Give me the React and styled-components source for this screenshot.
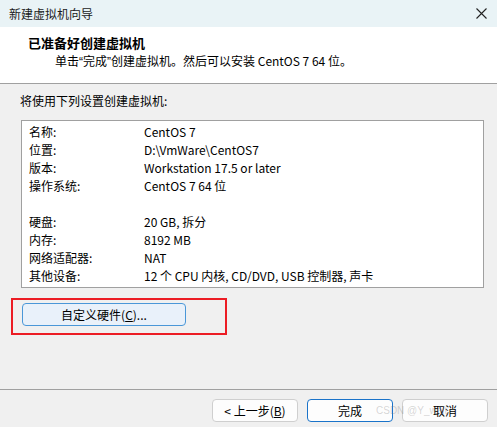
import React from "react";
import styled, { createGlobalStyle } from "styled-components";

const Global = createGlobalStyle`
  html, body { margin: 0; padding: 0; }
  body {
    font-family: "Noto Sans CJK SC", "Noto Sans", sans-serif;
    font-size: 12px;
    color: #000;
    background: #f0f0f0;
  }
`;

const Window = styled.div`
  position: relative;
  width: 497px;
  height: 427px;
  background: #f0f0f0;
  display: flex;
  flex-direction: column;
  overflow: hidden;
`;

const TitleBar = styled.div`
  height: 27px;
  flex: none;
  background: #e9f3f6;
  display: flex;
  align-items: center;
  justify-content: space-between;
  padding: 0 10px 0 9px;
`;

const TitleText = styled.span`
  font-size: 12px;
  line-height: 18px;
  color: #1a1a1a;
`;

const CloseIcon = styled.svg`
  width: 11px;
  height: 11px;
  display: block;
`;

const Header = styled.div`
  flex: none;
  height: 57px;
  box-sizing: border-box;
  background: #fff;
  border-bottom: 1px solid #a0a0a0;
  padding: 7px 0 0 28px;
`;

const HeaderTitle = styled.div`
  font-size: 13px;
  font-weight: 700;
  line-height: 18px;
`;

const HeaderSub = styled.div`
  line-height: 18px;
  padding-left: 27px;
`;

const Quote = styled.span`
  font-family: "Liberation Sans", Arial, sans-serif;
`;

const Body = styled.div`
  flex: 1;
  padding: 8px 13px 0 21px;
  display: flex;
  flex-direction: column;
`;

const Intro = styled.div`
  line-height: 18px;
  margin-left: -1px;
`;

const SummaryBox = styled.div`
  margin-top: 10px;
  height: 168px;
  box-sizing: border-box;
  background: #fff;
  border: 1px solid #a0a0a0;
  padding: 2px 0 0 7px;
`;

const Row = styled.div`
  display: grid;
  grid-template-columns: 115px 1fr;
  height: 18px;
  line-height: 18px;
  white-space: pre;
`;

const Highlight = styled.div`
  margin-top: 10px;
  margin-left: -10px;
  width: 216px;
  height: 37px;
  box-sizing: border-box;
  border: 2px solid #ec1c24;
  padding: 3px 0 0 9px;
`;

const HardwareButton = styled.button`
  width: 164px;
  height: 23px;
  box-sizing: border-box;
  border: 1px solid #4a97d8;
  border-radius: 4px;
  background: #e9f1fa;
  font-family: inherit;
  font-size: 12px;
  color: #000;
  padding: 0;
  line-height: 20px;
`;

const Separator = styled.div`
  flex: none;
  height: 1px;
  background: #a0a0a0;
`;

const Footer = styled.div`
  flex: none;
  height: 37px;
  box-sizing: border-box;
  display: flex;
  justify-content: flex-end;
  gap: 9px;
  padding: 9px 9px 0 0;
`;

const FooterButton = styled.button`
  width: 86px;
  height: 23px;
  box-sizing: border-box;
  border: 1px solid ${(p) => (p.$default ? "#1a73c9" : "#cfcfcf")};
  border-radius: 4px;
  background: #fdfdfd;
  font-family: inherit;
  font-size: 12px;
  color: #000;
  padding: 0;
  line-height: 20px;
`;

const Watermark = styled.div`
  position: absolute;
  left: 376px;
  top: 405px;
  font-family: "Liberation Sans", Arial, sans-serif;
  font-size: 10px;
  color: rgba(120, 120, 120, 0.3);
  pointer-events: none;
  white-space: nowrap;
`;

const rows = [
  ["名称:", "CentOS 7"],
  ["位置:", "D:\\VmWare\\CentOS7"],
  ["版本:", "Workstation 17.5 or later"],
  ["操作系统:", "CentOS 7 64 位"],
  ["", ""],
  ["硬盘:", "20 GB, 拆分"],
  ["内存:", "8192 MB"],
  ["网络适配器:", "NAT"],
  ["其他设备:", "12 个 CPU 内核, CD/DVD, USB 控制器, 声卡"],
];

export default function App() {
  return (
    <>
      <Global />
      <Window>
        <TitleBar>
          <TitleText>新建虚拟机向导</TitleText>
          <CloseIcon viewBox="0 0 11 11">
            <path d="M0.5 0.5 L10.5 10.5 M10.5 0.5 L0.5 10.5" stroke="#222" strokeWidth="1.1" fill="none" />
          </CloseIcon>
        </TitleBar>
        <Header>
          <HeaderTitle>已准备好创建虚拟机</HeaderTitle>
          <HeaderSub>
            单击<Quote>“</Quote>完成<Quote>”</Quote>创建虚拟机。然后可以安装 CentOS 7 64 位。
          </HeaderSub>
        </Header>
        <Body>
          <Intro>将使用下列设置创建虚拟机:</Intro>
          <SummaryBox>
            {rows.map(([k, v], i) => (
              <Row key={i}>
                <span>{k}</span>
                <span>{v}</span>
              </Row>
            ))}
          </SummaryBox>
          <Highlight>
            <HardwareButton>
              自定义硬件(<u>C</u>)...
            </HardwareButton>
          </Highlight>
        </Body>
        <Separator />
        <Footer>
          <FooterButton>
            &lt; 上一步(<u>B</u>)
          </FooterButton>
          <FooterButton $default>完成</FooterButton>
          <FooterButton>取消</FooterButton>
        </Footer>
        <Watermark>CSDN @Y_wait</Watermark>
      </Window>
    </>
  );
}
